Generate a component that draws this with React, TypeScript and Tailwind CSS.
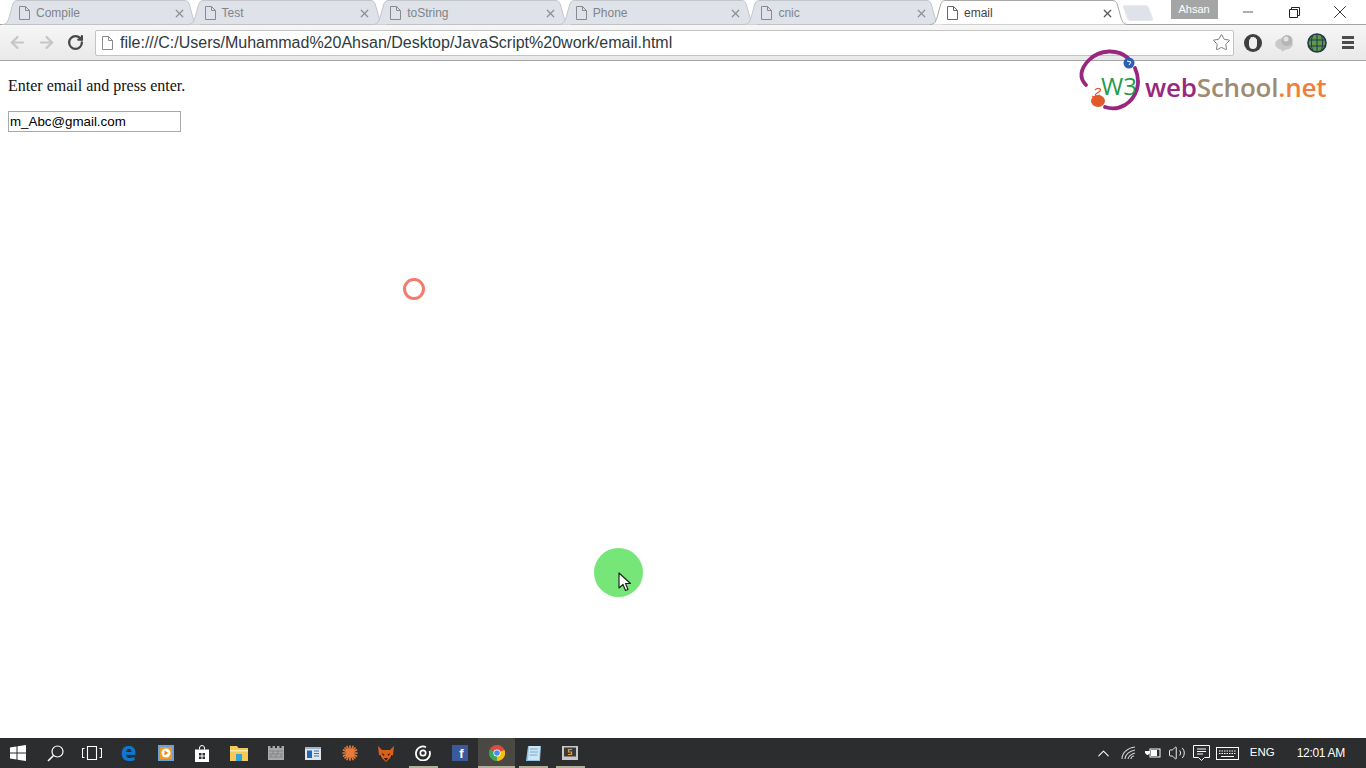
import { ArrowLeft, ArrowRight, RotateCw, Star, ChevronUp, Volume2, X, Minus } from 'lucide-react'

const sans = 'font-["Liberation_Sans",Arial,sans-serif]'

function PageIcon({ color = '#8a8a8a' }: { color?: string }) {
  return (
    <svg width="11" height="14" viewBox="0 0 11 14" fill="none" stroke={color} strokeWidth="1">
      <path d="M.5.5h6l4 4v9H.5z" />
      <path d="M6.5.5v4h4" />
    </svg>
  )
}

function Tab({ title, active }: { title: string; active?: boolean }) {
  return (
    <div className="relative h-6 w-[185.6px] shrink-0 flex items-center pl-[17px] pr-1 pt-[2px]">
      <svg className="absolute left-0 top-0" width="198" height="25" viewBox="0 0 198 25">
        <path
          d="M0 24.5C5 24.5 6 21 7.5 16L10.5 5C11.5 1.5 13 .5 16 .5H182C185 .5 186.500 1.500 187.500 5L190.500 16C192 21 193 24.500 198 24.500"
          fill={active ? '#ffffff' : '#dfe2e8'}
          stroke={active ? '#a8a8a8' : '#c3c6cb'}
        />
      </svg>
      <div className="relative flex items-center w-full">
        <PageIcon color={active ? '#666666' : '#8a8a8a'} />
        <span className={`ml-[6px] text-[12px] ${active ? 'text-[#444444]' : 'text-[#808488]'}`}>{title}</span>
        <X
          size={13}
          strokeWidth={2.2}
          className={`ml-auto -mr-[2px] ${active ? 'text-[#555555]' : 'text-[#8d9093]'}`}
        />
      </div>
    </div>
  )
}

function ExtHand() {
  return (
    <svg width="20" height="20" viewBox="0 0 20 20">
      <circle cx="10" cy="10" r="9" fill="#3f3f3f" />
      <path d="M6 9C6 7 6.500 6 7.200 6L7.500 4.800C8 3.800 9 4 9.300 4.500C10 3.500 11 3.700 11.300 4.600C12.200 4.200 13 4.800 13 5.800C13.800 5.800 14 6.500 14 7.500V11.500C14 14.500 12.500 16 10 16S6 14.500 6 11.500Z" fill="#f1f1f1" />
    </svg>
  )
}

function ExtBalloon() {
  return (
    <svg width="22" height="20" viewBox="0 0 22 20">
      <ellipse cx="10" cy="11" rx="9" ry="6" fill="#c9c9c9" />
      <circle cx="13" cy="7.500" r="5.500" fill="#b5b5b5" />
      <circle cx="12" cy="6" r="2.500" fill="#e4e4e4" />
      <path d="M7 15l1 4 4-3z" fill="#c9c9c9" />
    </svg>
  )
}

function ExtGlobe() {
  return (
    <svg width="20" height="20" viewBox="0 0 20 20">
      <circle cx="10" cy="10" r="9" fill="#5f9a4a" stroke="#22384f" strokeWidth="1.600" />
      <path d="M1.500 7h17M1.500 13h17M10 1v18M5.500 2.500c-1.500 5-1.500 10 0 15M14.500 2.500c1.500 5 1.500 10 0 15" fill="none" stroke="#22384f" strokeWidth="1" />
    </svg>
  )
}

function Toolbar() {
  return (
    <div className="h-[37px] flex items-center bg-gradient-to-b from-[#f6f6f6] to-[#e9e9e9] border-t border-b border-t-[#a2a2a2] border-b-[#a6a6a6] pl-[8px]">
      <ArrowLeft size={19} strokeWidth={2.800} className="text-[#c6c6c6]" />
      <ArrowRight size={19} strokeWidth={2.800} className="text-[#c6c6c6] ml-[10px]" />
      <RotateCw size={17} strokeWidth={3.200} className="text-[#484848] ml-[11px]" />
      <div className="ml-[11px] h-[26px] w-[1139px] flex items-center bg-white border border-[#c4c4c4] rounded-[2px] pl-[6px]">
        <PageIcon />
        <span className={`ml-[7px] pt-[1px] text-[16px] text-[#2f3a40] ${sans}`}>
          file:///C:/Users/Muhammad%20Ahsan/Desktop/JavaScript%20work/email.html
        </span>
        <Star size={19} strokeWidth={1.100} className="ml-auto mr-[2px] text-[#6d6d6d]" />
      </div>
      <div className="ml-[9px]"><ExtHand /></div>
      <div className="ml-[11px]"><ExtBalloon /></div>
      <div className="ml-[11px]"><ExtGlobe /></div>
      <div className="ml-[15px] flex flex-col gap-[2px]">
        <div className="w-[12px] h-[3px] bg-[#4c4c4c]" />
        <div className="w-[12px] h-[3px] bg-[#4c4c4c]" />
        <div className="w-[12px] h-[3px] bg-[#4c4c4c]" />
      </div>
    </div>
  )
}

function Logo() {
  return (
    <div className="absolute left-[1078px] top-[48px] flex">
      <div className="relative w-[66px] h-[64px]">
        <svg className="absolute left-0 top-0" width="66" height="64" viewBox="0 0 66 64">
          <path d="M50 10C40 1 22 1 11 12C2 21 1 30 8 37" fill="none" stroke="#98287f" strokeWidth="3.800" strokeLinecap="round" />
          <path d="M57 20C64 36 58 50 47 57C40 61 33 61 27 59" fill="none" stroke="#98287f" strokeWidth="3.800" strokeLinecap="round" />
          <circle cx="51" cy="15" r="5.500" fill="#2f5fb3" />
          <path d="M49 13l4 1-2 3" fill="none" stroke="#ffffff" strokeWidth="1" />
          <ellipse cx="20" cy="53" rx="7" ry="6" fill="#e2592a" />
          <path d="M14 48l3 2M17 42c3-3 7-1 5 1s-6 3-4 5c1 1 3 0 4-1" fill="none" stroke="#e2592a" strokeWidth="1.300" />
        </svg>
        <span className="absolute left-[23px] top-[23px] text-[24px] leading-[30px] font-medium text-[#1f9a4c] font-['Open_Sans',sans-serif]">
          W3
        </span>
      </div>
      <div className="mt-[21px] ml-[1px] text-[26px] leading-[36px] font-semibold tracking-[-0.2px] font-['Open_Sans',sans-serif]">
        <span className="text-[#98287f]">web</span>
        <span className="text-[#a08a72]">School</span>
        <span className="text-[#ee7f3c]">.net</span>
      </div>
    </div>
  )
}

function TaskIcon({ children, active, bar }: { children: React.ReactNode; active?: boolean; bar?: boolean }) {
  return (
    <div className={`relative h-full w-[36.800px] shrink-0 flex items-center justify-center ${active ? 'bg-[#4a4842]' : ''}`}>
      {children}
      {bar && <div className={`absolute bottom-0 h-[2px] bg-[#b5ad9c] ${active ? 'inset-x-0' : 'inset-x-[4px]'}`} />}
    </div>
  )
}

function Taskbar() {
  return (
    <div className="h-[30px] bg-[#2c2d2e] flex items-center text-white">
      <TaskIcon>
        <svg width="16" height="16" viewBox="0 0 16 16" fill="#ffffff">
          <path d="M0 2.500l6.500-1v6H0zM7.500 1.300L16 0v7.500H7.500zM0 8.500h6.500v6L0 13.500zM7.500 8.500H16V16l-8.500-1.300z" />
        </svg>
      </TaskIcon>
      <TaskIcon>
        <svg width="17" height="17" viewBox="0 0 17 17" fill="none" stroke="#ffffff" strokeWidth="1.200">
          <circle cx="10.500" cy="6.500" r="5.500" />
          <path d="M6.500 10.500L1 16" strokeWidth="1.600" />
        </svg>
      </TaskIcon>
      <TaskIcon>
        <svg width="20" height="14" viewBox="0 0 20 14" fill="none" stroke="#ffffff" strokeWidth="1.100">
          <path d="M5.500.5h9v13h-9zM2.500 2.500H.5v9h2M17.500 2.500h2v9h-2" />
        </svg>
      </TaskIcon>
      <TaskIcon>
        <span className="text-[27px] leading-none font-bold text-[#0a78d7] -mt-[5px] font-['Open_Sans',sans-serif]">e</span>
      </TaskIcon>
      <TaskIcon>
        <svg width="16" height="16" viewBox="0 0 16 16">
          <rect width="16" height="16" fill="#6ea1d4" />
          <rect x="2" y="2" width="12" height="12" fill="#f19a1f" />
          <circle cx="8" cy="8" r="4.500" fill="#ffffff" />
          <path d="M6.500 5.500l4 2.500-4 2.500z" fill="#ee8a12" />
        </svg>
      </TaskIcon>
      <TaskIcon>
        <svg width="14" height="17" viewBox="0 0 14 17" fill="#ffffff">
          <path d="M4.500 4.500V3a2.500 2.500 0 015 0v1.500" fill="none" stroke="#ffffff" strokeWidth="1" />
          <path d="M0 4.500h14V17H0z" />
          <path d="M4 8h2.500v2.500H4zM7.500 8H10v2.500H7.500zM4 11.500h2.500V14H4zM7.500 11.500H10V14H7.500z" fill="#2c2d2e" />
        </svg>
      </TaskIcon>
      <TaskIcon>
        <svg width="18" height="16" viewBox="0 0 18 16">
          <path d="M0 1h7l1.500 2H18v13H0z" fill="#f5c95a" />
          <path d="M0 5h18v1.500H0z" fill="#fbe9a9" />
          <path d="M6 9h6v7H6z" fill="#35a3d8" />
        </svg>
      </TaskIcon>
      <TaskIcon>
        <svg width="16" height="14" viewBox="0 0 16 14" fill="#a9a9a9">
          <path d="M0 0h2.500v2H4.500V0H7v2h2V0h2.500v2h2V0H16v14H0z" />
          <path d="M1 5h14M1 8h14M1 11h14M5 5v3M10 5v3M3 8v3M8 8v3M13 8v3" stroke="#737373" strokeWidth=".6" />
        </svg>
      </TaskIcon>
      <TaskIcon>
        <svg width="16" height="13" viewBox="0 0 16 13">
          <rect width="16" height="13" fill="#dfe6ee" />
          <rect y="0" width="16" height="2" fill="#9fb4cc" />
          <rect x="2" y="3.500" width="5" height="7.500" fill="#1f69b5" />
          <path d="M9 4h5M9 6.500h5M9 9h5" stroke="#46709e" />
        </svg>
      </TaskIcon>
      <TaskIcon>
        <svg width="16" height="16" viewBox="0 0 16 16" stroke="#e87b3c" strokeWidth="1.700" strokeLinecap="round">
          <path d="M8 1v14M1 8h14M3 3l10 10M13 3L3 13M5 1.500l6 13M11 1.500l-6 13M1.500 5l13 6M14.500 5l-13 6" />
        </svg>
      </TaskIcon>
      <TaskIcon>
        <svg width="16" height="17" viewBox="0 0 16 17">
          <path d="M0 1l4 4h8l4-4-1 9-7 7-7-7z" fill="#d8601f" />
          <path d="M3.500 8l3 1.500-1 1.500zM12.500 8l-3 1.500 1 1.500zM6 13h4l-2 3z" fill="#3a1608" />
          <path d="M3 13l-1-3M13 13l1-3" stroke="#3a1608" strokeWidth="1" />
        </svg>
      </TaskIcon>
      <TaskIcon bar>
        <svg width="16" height="16" viewBox="0 0 16 16" fill="none" stroke="#ffffff">
          <path d="M11 2.200A7 7 0 1014.500 6" strokeWidth="1.800" />
          <circle cx="8" cy="8" r="2.700" strokeWidth="1.700" />
        </svg>
      </TaskIcon>
      <TaskIcon>
        <div className="w-4 h-4 bg-[#3b5a9c] flex items-end justify-center">
          <span className={`text-[13px] leading-[15px] font-bold text-white ml-[3px] ${sans}`}>f</span>
        </div>
      </TaskIcon>
      <TaskIcon active bar>
        <svg width="16" height="16" viewBox="0 0 16 16">
          <circle cx="8" cy="8" r="8" fill="#dd4b3e" />
          <path d="M8 8L1 4.500A8 8 0 008 16z" fill="#3aa757" />
          <path d="M8 8v8a8 8 0 007.500-11z" fill="#f4c20d" />
          <circle cx="8" cy="8" r="3.600" fill="#ffffff" />
          <circle cx="8" cy="8" r="2.800" fill="#4a8af4" />
        </svg>
      </TaskIcon>
      <TaskIcon bar>
        <svg width="16" height="17" viewBox="0 0 16 17">
          <path d="M2 1h13l-1 15H0z" fill="#8fc2e6" />
          <path d="M3 1h11l-1 14H2z" fill="#cfe6f5" />
          <path d="M4 4h8M4 7h8M3.500 10h8" stroke="#7aa7c9" />
        </svg>
      </TaskIcon>
      <TaskIcon bar>
        <svg width="16" height="14" viewBox="0 0 16 14">
          <rect width="16" height="14" fill="#c9c9c9" />
          <rect x="2" y="1.500" width="12" height="9" fill="#3a3a3a" />
          <path d="M10 3.500H6.500v2.500H9.500v2.500H6" fill="none" stroke="#e79a2e" strokeWidth="1.200" />
        </svg>
      </TaskIcon>

      <div className="ml-auto flex items-center h-full">
        <ChevronUp size={19} strokeWidth={1.300} className="mr-[7px]" />
        <svg className="ml-[1px]" width="15" height="14" viewBox="0 0 15 14" fill="none" stroke="#cfcfcf" strokeWidth="1.100">
          <path d="M1 13C1 7 6 2 14 1M4 13c0-4 4-8 10-9M7 13c0-2 3-5 7-6" />
          <path d="M10 13c0-1 1-3 3-3" />
        </svg>
        <svg className="ml-[9px]" width="16" height="12" viewBox="0 0 16 12" fill="#ffffff">
          <rect x="5" y="2" width="10" height="8" fill="none" stroke="#ffffff" />
          <rect x="6" y="3" width="6" height="6" />
          <path d="M1 1v3M4 1v3M0 4h5v2l-2 2H2L0 6z" />
        </svg>
        <Volume2 size={18} strokeWidth={1.200} className="ml-[7px]" />
        <svg className="ml-[7px]" width="17" height="17" viewBox="0 0 17 17" fill="none" stroke="#ffffff">
          <path d="M.5.500h16v12h-5l-3 3-3-3h-5z" />
          <path d="M4 4h9M4 6.500h9M4 9h6" />
        </svg>
        <svg className="ml-[6px]" width="23" height="13" viewBox="0 0 23 13" fill="none" stroke="#ffffff">
          <rect x=".5" y=".5" width="22" height="12" />
          <path d="M3 4h17M3 6.500h17" strokeDasharray="1.500 1" />
          <path d="M5 9.500h13" />
        </svg>
        <span className={`ml-[11px] text-[11.500px] ${sans}`}>ENG</span>
        <span className={`ml-[22px] mr-[21px] text-[12px] tracking-[-0.3px] ${sans}`}>12:01 AM</span>
      </div>
    </div>
  )
}

export default function App() {
  return (
    <div className="relative h-screen w-full flex flex-col bg-white overflow-hidden">
      <div className="h-6 flex items-stretch relative">
        <div className={`flex pl-[2px] ${sans}`}>
          <Tab title="Compile" />
          <Tab title="Test" />
          <Tab title="toString" />
          <Tab title="Phone" />
          <Tab title="cnic" />
          <Tab title="email" active />
        </div>
        <div className="w-[26px] h-[16px] mt-[5px] ml-[9px] bg-[#dfe2e8] rounded-[3px] skew-x-[20deg] border border-[#e6e8ec]" />
        <div className={`ml-[20px] w-[47px] h-[19px] bg-[#a5a5a5] text-white text-[11px] leading-[18px] text-center ${sans}`}>
          Ahsan
        </div>
        <div className="ml-auto mr-[3px] flex">
          <div className="w-[46px] h-full flex items-center justify-center text-[#222222]"><Minus size={16} strokeWidth={1.100} /></div>
          <div className="w-[46px] h-full flex items-center justify-center">
            <svg width="11" height="11" viewBox="0 0 11 11" fill="none" stroke="#222222">
              <path d="M.5 2.500h8v8h-8zM2.500 2.500v-2h8v8h-2" />
            </svg>
          </div>
          <div className="w-[46px] h-full flex items-center justify-center text-[#222222]"><X size={22} strokeWidth={1} /></div>
        </div>
      </div>
      <Toolbar />

      <main className="flex-1 relative px-2 pt-4">
        <p className="font-['Liberation_Serif',serif] text-[16px] leading-[18px] text-[#111111]">Enter email and press enter.</p>
        <input
          readOnly
          value="m_Abc@gmail.com"
          className={`mt-4 block w-[173px] h-[21px] px-[1px] border border-[#a9a9a9] text-[13.333px] text-black outline-none ${sans}`}
        />
        {/* click marker */}
        <div className="absolute left-[403px] top-[217px] w-[22px] h-[22px] rounded-full border-[3px] border-[#f47a6c]" />
        {/* cursor highlight */}
        <div className="absolute left-[594px] top-[487px] w-[49px] h-[49px] rounded-full bg-[#75e677]" />
        <svg className="absolute left-[618px] top-[511px]" width="14" height="21" viewBox="0 0 14 21">
          <path d="M1 1v15l4-3.500 2.500 6 2.500-1-2.500-6h5z" fill="#ffffff" stroke="#222222" strokeWidth="1.200" strokeLinejoin="round" />
        </svg>
      </main>

      <Taskbar />
      <Logo />
    </div>
  )
}
